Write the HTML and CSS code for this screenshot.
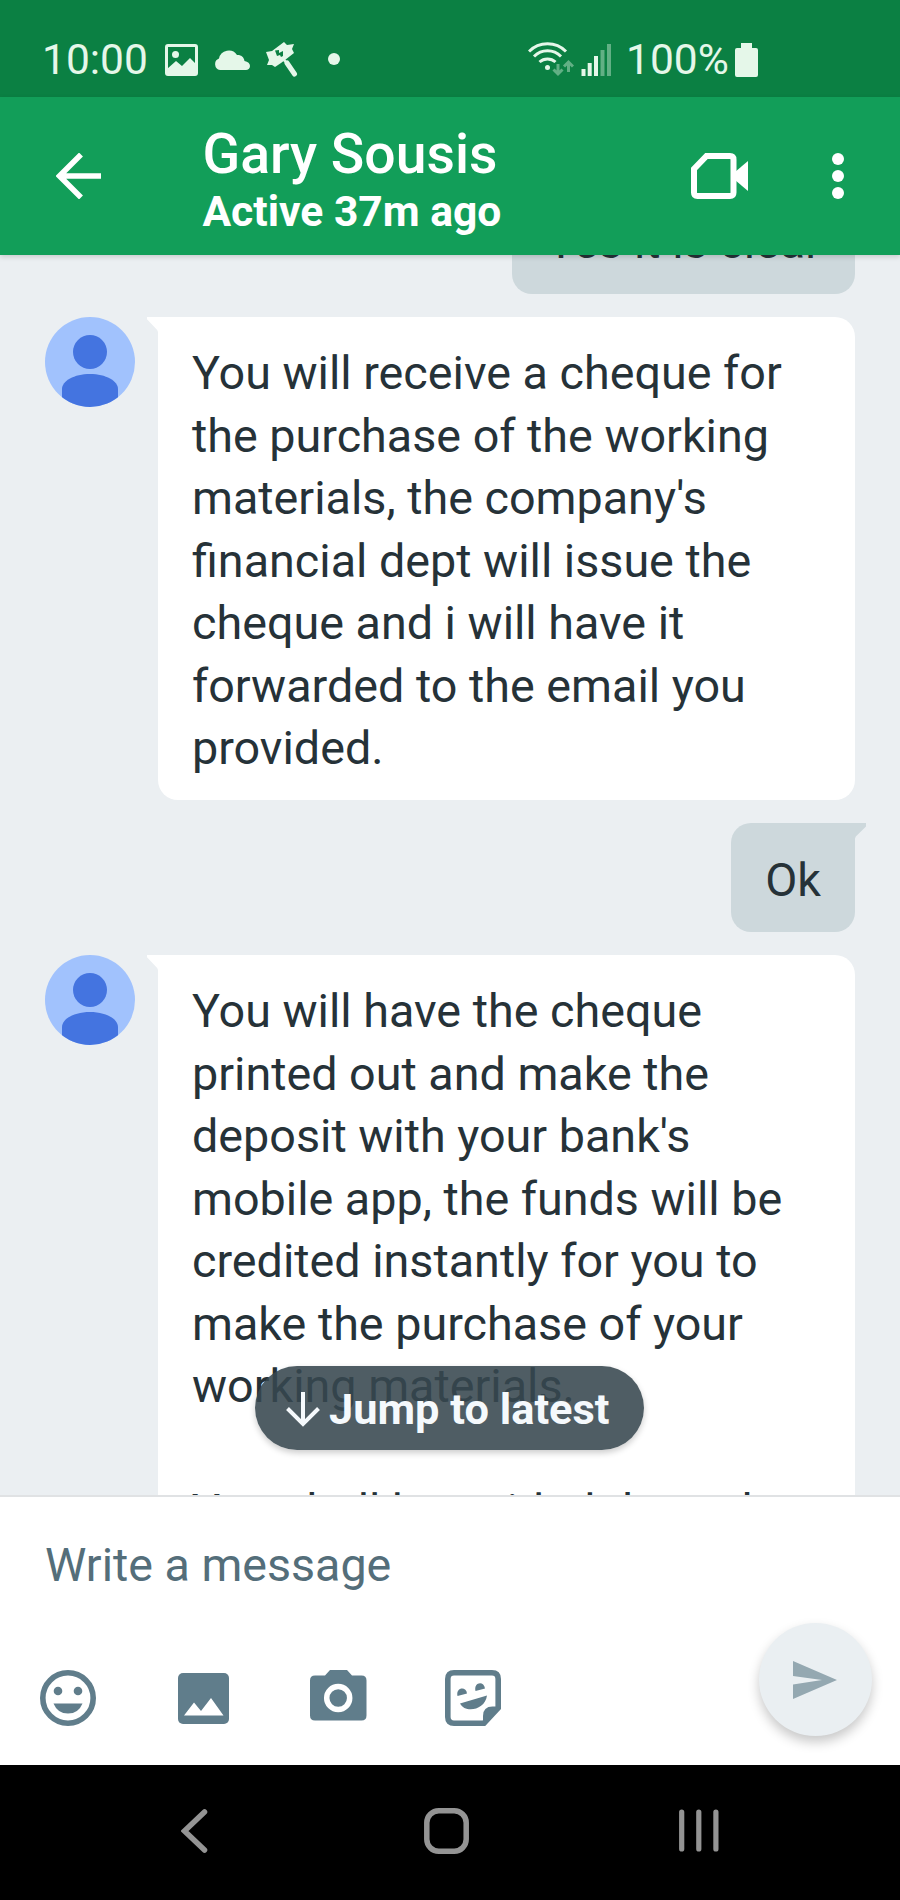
FILE: index.html
```html
<!DOCTYPE html>
<html lang="en">
<head>
    <meta charset="UTF-8">
    <meta name="viewport" content="width=device-width, initial-scale=1.0">
    <title>Gary Sousis</title>
    <link rel="stylesheet" href="styles.css">
</head>
<body>
    <div class="phone">
        <!-- Status bar -->
        <div class="status-bar">
            <span class="clock">10:00</span>
            <svg class="status-image" width="34" height="32" viewBox="0 0 34 32">
                <rect x="1.500" y="1.500" width="30" height="29" rx="1.500" fill="none" stroke="currentColor" stroke-width="3"/>
                <circle cx="10.500" cy="10.500" r="3.500" fill="currentColor"/>
                <path d="M2 25l9-8 6 5 8-8 6 6v10H2z" fill="currentColor"/>
            </svg>
            <svg class="status-cloud" width="36" height="20" viewBox="0 0 36 20">
                <path d="M6 20a6 6 0 0 1-1-11.500A10 10 0 0 1 23 5c3-.5 7 1.500 7.500 6C34 11.500 36 13.500 36 16s-2 4-4 4z" fill="currentColor"/>
            </svg>
            <svg class="status-hammer" width="33" height="37" viewBox="0 0 33 37">
                <path d="M1 11l6-1L19 1l3 3 7-1-2 5 2 4-9 7-4 3-6 4-3-2-5 0 2-5z" fill="currentColor"/>
                <path d="M17 17l5 5" stroke="currentColor" stroke-width="2.500"/>
                <path d="M22 22l7.500 11" stroke="currentColor" stroke-width="5" stroke-linecap="round"/>
                <path d="M10 9.500l4-.5 0 3 4-2 0 5-2 1-1-2-3 1z" fill="#0b8043"/>
            </svg>
            <span class="status-dot"></span>
            <div class="status-right">
                <svg width="46" height="35" viewBox="0 0 46 35" fill="none" stroke="currentColor" stroke-width="3">
                    <path d="M1 9.500a26 26 0 0 1 37 0M6 14.500a19 19 0 0 1 27 0M11.500 20a12 12 0 0 1 16 0"/>
                    <circle cx="19.500" cy="25.500" r="2.500" fill="currentColor" stroke="none"/>
                    <path class="faint" d="M30 22v9M25.500 27.500l4.500 4.500 4.500-4.500M40.500 30v-9M36 24.500l4.500-4.500 4.500 4.500"/>
                </svg>
                <svg class="signal" width="31" height="33" viewBox="0 0 31 33" fill="none" stroke="currentColor" stroke-width="4">
                    <path d="M2.500 33v-7M8.700 33v-13M15 33v-20"/>
                    <path class="faint" d="M21.500 33v-26M28 33v-32"/>
                </svg>
                <span class="battery-text">100%</span>
                <svg width="23" height="34" viewBox="0 0 23 34">
                    <path d="M6 0h11v5h4q2 0 2 2v25q0 2-2 2H2q-2 0-2-2V7q0-2 2-2h4z" fill="currentColor"/>
                </svg>
            </div>
        </div>

        <div class="chat-header">
            <svg class="back-icon" width="46" height="46" viewBox="0 0 46 46" fill="none" stroke="currentColor" stroke-width="5.500">
                <path d="M45 23H4M25 1.500L3.500 23 25 44.500"/>
            </svg>
            <div class="chat-header-text">
                <div class="contact-name">Gary Sousis</div>
                <div class="contact-status">Active 37m ago</div>
            </div>
            <svg class="video-icon" width="58" height="46" viewBox="0 0 58 46">
                <path d="M15.500 3H39q3.500 0 3.500 3.500v33q0 3.500-3.500 3.500H6.500Q3 43 3 39.500V16z" fill="none" stroke="currentColor" stroke-width="6"/>
                <path d="M44 19L57 8v30L44 27z" fill="currentColor"/>
            </svg>
            <div class="more-icon">
                <span></span>
                <span></span>
                <span></span>
            </div>
        </div>

        <div class="chat-content" id="chat-box">
            <div class="message-row user-row">
                <div class="message user-message first-message">Yes it is clear</div>
            </div>

            <div class="message-row">
                <svg class="avatar" width="90" height="90" viewBox="0 0 90 90">
                    <clipPath id="circle"><circle cx="45" cy="45" r="45"/></clipPath>
                    <g clip-path="url(#circle)">
                        <rect width="90" height="90" fill="#a1c2fd"/>
                        <circle cx="45" cy="35" r="17" fill="#4474e0"/>
                        <path d="M17 90V72c0-8 12-15 28-15s28 7 28 15v18z" fill="#4474e0"/>
                    </g>
                </svg>
                <div class="message bot-message">You will receive a cheque for<br>the purchase of the working<br>materials, the company's<br>financial dept will issue the<br>cheque and i will have it<br>forwarded to the email you<br>provided.</div>
            </div>

            <div class="message-row user-row">
                <div class="message user-message">Ok</div>
            </div>

            <div class="message-row">
                <svg class="avatar" width="90" height="90" viewBox="0 0 90 90">
                    <g clip-path="url(#circle)">
                        <rect width="90" height="90" fill="#a1c2fd"/>
                        <circle cx="45" cy="35" r="17" fill="#4474e0"/>
                        <path d="M17 90V72c0-8 12-15 28-15s28 7 28 15v18z" fill="#4474e0"/>
                    </g>
                </svg>
                <div class="message bot-message">You will have the cheque<br>printed out and make the<br>deposit with your bank's<br>mobile app, the funds will be<br>credited instantly for you to<br>make the purchase of your<br>working materials.<br><br>You shall be guided through</div>
            </div>

            <button class="jump-button">
                <svg width="34" height="35" viewBox="0 0 34 35" fill="none" stroke="currentColor" stroke-width="4">
                    <path d="M17 0v32M1.500 16.500L17 32l15.500-15.500"/>
                </svg>
                Jump to latest
            </button>
        </div>

        <div class="input-container">
            <div class="placeholder">Write a message</div>
            <div class="toolbar">
                <svg width="56" height="56" viewBox="0 0 56 56">
                    <circle cx="28" cy="28" r="25.200" fill="none" stroke="currentColor" stroke-width="5.600"/>
                    <circle cx="18" cy="21" r="4.300" fill="currentColor"/>
                    <circle cx="38" cy="21" r="4.300" fill="currentColor"/>
                    <path d="M13.500 33.500h29q-4 10-14.500 10t-14.500-10z" fill="currentColor"/>
                </svg>
                <svg class="image-icon" width="51" height="51" viewBox="0 0 51 51">
                    <rect width="51" height="51" rx="5" fill="currentColor"/>
                    <path d="M6 42.500l10-13 7 8.500 10-13 12.500 17.500z" fill="#fff"/>
                </svg>
                <svg class="camera-icon" width="57" height="51" viewBox="0 0 57 51">
                    <path d="M20 0h17l5 5.500h9.500q5 0 5 5v35q0 5-5 5H5q-5 0-5-5v-35q0-5 5-5h10z" fill="currentColor"/>
                    <circle cx="28.200" cy="28" r="11.500" fill="none" stroke="#fff" stroke-width="5.500"/>
                </svg>
                <svg class="sticker-icon" width="56" height="56" viewBox="0 0 56 56">
                    <path d="M39 53.200H9q-6.200 0-6.200-6.200V9Q2.800 2.800 9 2.800h38q6.200 0 6.200 6.200v29z" fill="none" stroke="currentColor" stroke-width="5.600"/>
                    <path d="M56 36.500L38 55V46q0-9.500 9.500-9.500z" fill="currentColor"/>
                    <path d="M12.500 26c-2-9 9-10 9.500-2.500zM30.500 21c-2-9 8.500-10.500 9.500-2.500zM15 33.500l27-8c-2 15-22 18-27 8z" fill="currentColor"/>
                </svg>
            </div>
            <button class="send-button">
                <svg width="44" height="38" viewBox="0 0 44 38">
                    <path d="M0 0l44 19L0 38V23.500L29 19 0 15z" fill="currentColor"/>
                </svg>
            </button>
        </div>

        <div class="nav-bar">
            <svg width="27" height="44" viewBox="0 0 27 44" fill="none" stroke="currentColor" stroke-width="5.500" stroke-linecap="round">
                <path d="M23.500 3L3.500 22l20 19"/>
            </svg>
            <svg class="nav-home" width="45" height="46" viewBox="0 0 45 46" fill="none" stroke="currentColor" stroke-width="5.500">
                <rect x="2.800" y="2.800" width="39.400" height="40.400" rx="12"/>
            </svg>
            <svg class="nav-recent" width="40" height="43" viewBox="0 0 40 43" stroke="currentColor" stroke-width="5.200" stroke-linecap="round">
                <path d="M2.700 3v37M19.800 3v37M36.900 3v37"/>
            </svg>
        </div>
    </div>
</body>
</html>
```
FILE: styles.css
```css
:root {
    --status-color: #0b8043;
    --primary-color: #129e59;
    --background-color: #ebeff2;
    --user-color: #cdd8dc;
    --icon-color: #607d8b;
    --text-primary: #263238;
}

* {
    margin: 0;
    padding: 0;
    box-sizing: border-box;
    font-family: Roboto, "Liberation Sans", sans-serif;
}

body {
    background: #000000;
}

svg {
    display: block;
    flex-shrink: 0;
}

.phone {
    display: flex;
    flex-direction: column;
    width: 900px;
    height: 1900px;
    overflow: hidden;
}

.status-bar {
    height: 97px;
    padding: 22px 142px 0 42px;
    display: flex;
    align-items: center;
    background: var(--status-color);
    color: #e5f7e9;
    font-size: 42.5px;
}

.clock {
    width: 123px;
    white-space: nowrap;
}

.status-cloud {
    margin-left: 15px;
}

.status-hammer {
    margin-left: 15px;
}

.status-dot {
    width: 12px;
    height: 12px;
    margin: -2px 0 0 30px;
    border-radius: 50%;
    background: currentColor;
}

.status-right {
    margin-left: auto;
    display: flex;
    align-items: center;
}

.signal {
    margin: 0 14px 0 7px;
}

.faint {
    opacity: 0.4;
}

.battery-text {
    width: 109px;
    white-space: nowrap;
}

.chat-header {
    height: 158px;
    padding: 0 56px;
    display: flex;
    align-items: center;
    background: var(--primary-color);
    color: #ffffff;
    position: relative;
    z-index: 1;
    box-shadow: 0 2px 5px rgba(0, 0, 0, 0.15);
}

.chat-header-text {
    margin-left: 100.5px;
    padding-top: 9px;
    flex: 1;
    white-space: nowrap;
}

.contact-name {
    font-size: 55.3px;
    font-weight: 500;
    line-height: 60px;
}

.contact-status {
    font-size: 42.6px;
    font-weight: 700;
    line-height: 52px;
}

.more-icon {
    display: flex;
    flex-direction: column;
    gap: 5px;
    margin-left: 83px;
}

.more-icon span {
    width: 12px;
    height: 12px;
    border-radius: 50%;
    background: #ffffff;
}

.chat-content {
    height: 1240px;
    padding: 0 45px;
    display: flex;
    flex-direction: column;
    justify-content: flex-start;
    gap: 23px;
    overflow: hidden;
    position: relative;
    background: var(--background-color);
}

.message-row {
    display: flex;
    align-items: flex-start;
    gap: 23px;
    flex-shrink: 0;
}

.user-row {
    justify-content: flex-end;
}

.message {
    padding: 25.5px 34px 20.5px;
    border-radius: 20px;
    font-size: 46.7px;
    line-height: 62.5px;
    color: var(--text-primary);
    white-space: nowrap;
    position: relative;
}

.first-message {
    margin-top: -70px;
    padding-left: 35px;
}

.bot-message {
    flex: 1;
    background: #ffffff;
    border-top-left-radius: 0;
}

.user-message {
    background: var(--user-color);
    border-top-right-radius: 0;
}

/* bubble tails */
.bot-message::before,
.user-message::before {
    content: '';
    position: absolute;
    top: 0;
    width: 12px;
    height: 18px;
    background: inherit;
}

.bot-message::before {
    left: -11px;
    clip-path: polygon(0 0, 100% 0, 100% 100%, 85% 75%, 0 15%);
}

.user-message::before {
    right: -11px;
    clip-path: polygon(0 0, 100% 0, 100% 20%, 15% 75%, 0 100%);
}

.jump-button {
    position: absolute;
    left: 255px;
    bottom: 45px;
    width: 389px;
    height: 84px;
    padding: 2px 0 0 31px;
    display: flex;
    align-items: center;
    gap: 9px;
    border: none;
    border-radius: 42px;
    background: rgba(55, 71, 79, 0.88);
    box-shadow: 0 3px 6px rgba(0, 0, 0, 0.2);
    color: #f5f9fc;
    font-size: 43.4px;
    font-weight: 700;
    white-space: nowrap;
}

.input-container {
    height: 270px;
    padding: 38px 40px 0;
    border-top: 2px solid #e0e2e4;
    background: #ffffff;
    position: relative;
}

.placeholder {
    margin-left: 5px;
    font-size: 46.6px;
    line-height: 60px;
    color: #546e7a;
}

.toolbar {
    margin-top: 75px;
    display: flex;
    align-items: center;
    color: var(--icon-color);
}

.image-icon {
    margin-left: 81.5px;
}

.camera-icon {
    margin: -5px 0 0 81.5px;
}

.sticker-icon {
    margin-left: 78px;
}

.send-button {
    position: absolute;
    right: 28.5px;
    bottom: 29px;
    width: 113px;
    height: 113px;
    display: flex;
    align-items: center;
    justify-content: center;
    border: none;
    border-radius: 50%;
    background: #eaeff2;
    color: #94a8b1;
    box-shadow: 0 6px 12px rgba(0, 0, 0, 0.22);
}

.nav-bar {
    height: 135px;
    padding: 0 181px 4px;
    display: flex;
    align-items: center;
    color: #949494;
    background: #000000;
}

.nav-home {
    margin-left: 216px;
}

.nav-recent {
    margin-left: auto;
}
```
